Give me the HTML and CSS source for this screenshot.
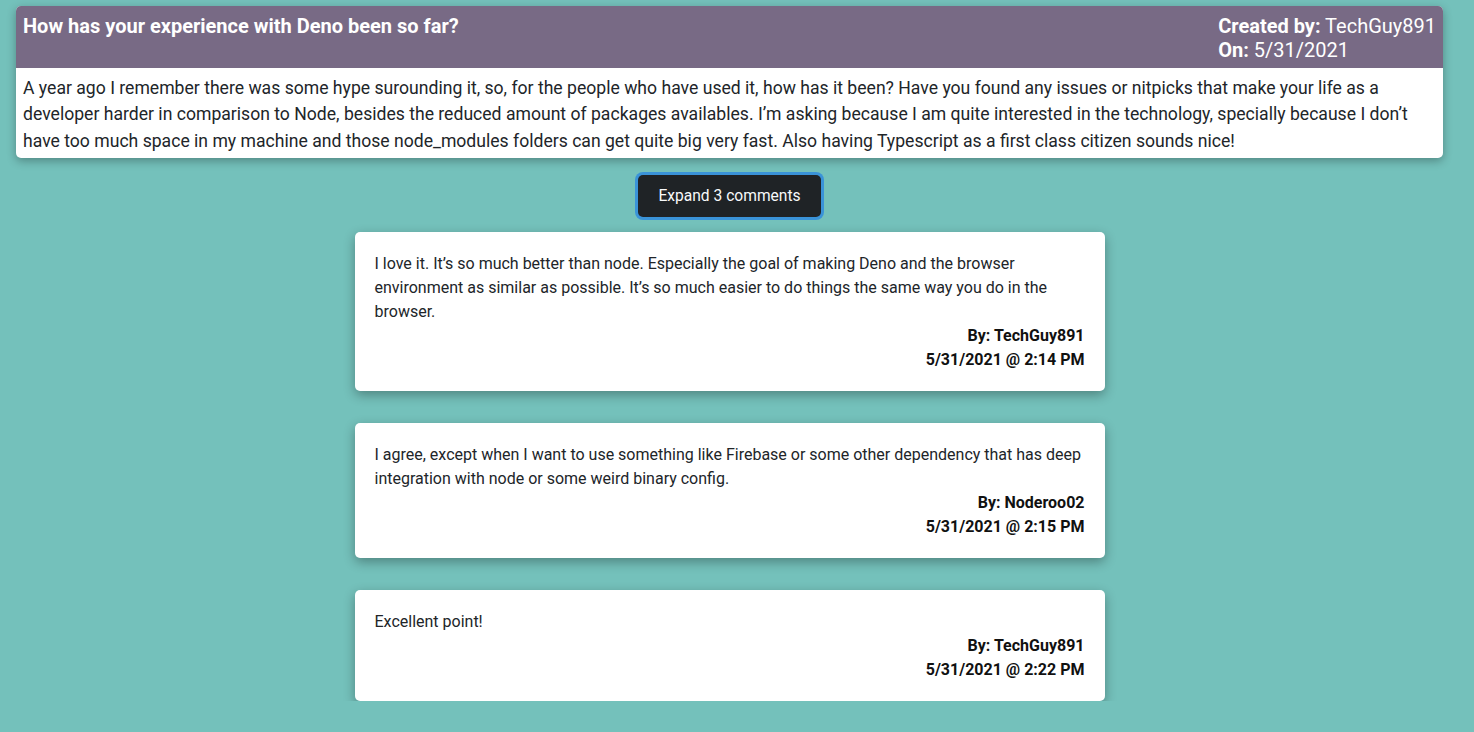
FILE: index.html
```html
<!DOCTYPE html>
<html lang="en">
<head>
<meta charset="utf-8">
<title>Deno discussion</title>
<link rel="stylesheet" href="styles.css">
</head>
<body>
<main class="page">
  <article class="post">
    <header class="post-header">
      <h5 class="post-title">How has your experience with Deno been so far?</h5>
      <div class="post-meta">
        <div><strong>Created by:</strong> TechGuy891</div>
        <div><strong>On:</strong> 5/31/2021</div>
      </div>
    </header>
    <p class="post-body">A year ago I remember there was some hype surounding it, so, for the people who have used it, how has it been? Have you found any issues or nitpicks that make your life as a developer harder in comparison to Node, besides the reduced amount of packages availables. I’m asking because I am quite interested in the technology, specially because I don’t have too much space in my machine and those node_modules folders can get quite big very fast. Also having Typescript as a first class citizen sounds nice!</p>
  </article>

  <div class="expand-row">
    <button class="expand-btn" type="button">Expand 3 comments</button>
  </div>

  <section class="comments">
    <div class="comment">
      <p class="comment-text">I love it. It’s so much better than node. Especially the goal of making Deno and the browser environment as similar as possible. It’s so much easier to do things the same way you do in the browser.</p>
      <div class="comment-by">By: TechGuy891</div>
      <div class="comment-date">5/31/2021 @ 2:14 PM</div>
    </div>
    <div class="comment">
      <p class="comment-text">I agree, except when I want to use something like Firebase or some other dependency that has deep integration with node or some weird binary config.</p>
      <div class="comment-by">By: Noderoo02</div>
      <div class="comment-date">5/31/2021 @ 2:15 PM</div>
    </div>
    <div class="comment">
      <p class="comment-text">Excellent point!</p>
      <div class="comment-by">By: TechGuy891</div>
      <div class="comment-date">5/31/2021 @ 2:22 PM</div>
    </div>
  </section>
</main>
</body>
</html>
```
FILE: styles.css
```css
html, body {
  margin: 0;
  padding: 0;
}

body {
  background: #74c1bb;
  font-family: Roboto, "Liberation Sans", sans-serif;
  color: #212529;
  font-size: 16px;
  line-height: 1.5;
}

.page {
  width: calc(100% - 15px);
  padding-top: 6px;
}

.post {
  margin: 0 16px;
  background: #fff;
  border-radius: 5px;
  overflow: hidden;
  box-shadow: 0 3px 10px rgba(0, 0, 0, 0.3);
}

.post-header {
  display: flex;
  justify-content: space-between;
  align-items: flex-start;
  background: #786a85;
  color: #fff;
  padding: 8px 7px 6px 7px;
}

.post-title {
  margin: 0;
  font-size: 20px;
  font-weight: 700;
  line-height: 24px;
}

.post-meta {
  font-size: 20px;
  line-height: 24px;
}

.post-meta strong {
  font-weight: 700;
}

.post-body {
  margin: 0;
  padding: 7px 7px 4px 7px;
  font-size: 17.6px;
  line-height: 26.4px;
}

.expand-row {
  display: flex;
  justify-content: center;
  padding: 17px 0 15px;
}

.expand-btn {
  font-family: Roboto, "Liberation Sans", sans-serif;
  font-size: 15.6px;
  line-height: 24px;
  color: #f8f9fa;
  background: #1f2326;
  border: 0;
  border-radius: 5px;
  padding: 9px 18px;
  width: 183px;
  box-shadow: 0 0 0 3px #3a93d8;
  cursor: pointer;
}

.comments {
  display: flex;
  flex-direction: column;
  align-items: center;
  gap: 32px;
}

.comment {
  width: 750px;
  box-sizing: border-box;
  background: #fff;
  border-radius: 5px;
  padding: 20px 20px 19px;
  box-shadow: 0 4px 12px rgba(0, 0, 0, 0.32);
  font-size: 16px;
  line-height: 24px;
}

.comment-text {
  margin: 0;
}

.comment-by,
.comment-date {
  text-align: right;
  font-weight: 700;
  color: #111;
}
```
